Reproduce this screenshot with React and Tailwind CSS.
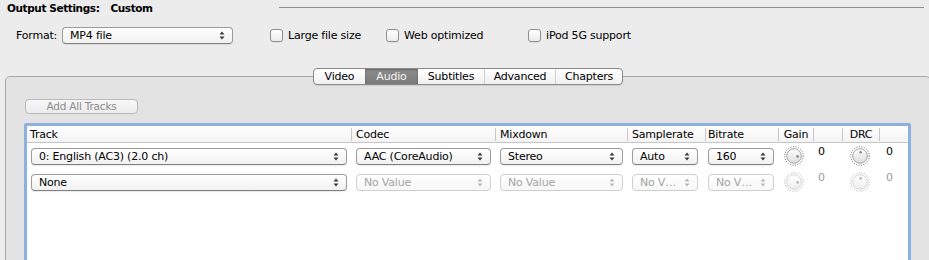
import React from "react";

function Stepper({ disabled }) {
  const c = disabled ? "#b8b8b8" : "#3a3a3a";
  return (
    <svg width="6" height="9" viewBox="0 0 6 9" className="flex-none">
      <path d="M0.5 3.5 L3 0.5 L5.5 3.5 Z" fill={c} />
      <path d="M0.5 5.5 L3 8.5 L5.5 5.5 Z" fill={c} />
    </svg>
  );
}

function Popup({ label, w, disabled, h = "h-[17px]" }) {
  return (
    <div
      className={`${w} ${h} flex-none flex items-center justify-between pl-[7px] pr-[7px] rounded-[4px] border bg-linear-to-b ${
        disabled
          ? "border-[#cfcfcf] from-white to-[#f7f7f7] text-[#a3a3a3]"
          : "border-[#9c9c9c] border-b-[#7f7f7f] from-white to-[#f1f1f1] text-black shadow-[0_1px_1px_rgba(0,0,0,0.08)]"
      }`}
    >
      <span className="truncate leading-none">{label}</span>
      <Stepper disabled={disabled} />
    </div>
  );
}

function Checkbox({ label }) {
  return (
    <div className="flex items-center">
      <div className="w-[13px] h-[13px] rounded-[3px] border border-[#8e8e8e] bg-linear-to-b from-white to-[#ebebeb] shadow-[0_1px_0_rgba(0,0,0,0.06)]" />
      <span className="ml-[5px] leading-none">{label}</span>
    </div>
  );
}

function Knob({ disabled, dot }) {
  const ring = disabled ? "#a8a8a8" : "#555";
  const edge = disabled ? "#cfcfcf" : "#9a9a9a";
  const dotC = disabled ? "#b5b5b5" : "#8a8a8a";
  return (
    <svg width="20" height="20" viewBox="0 0 20 20" className="flex-none">
      <defs>
        <linearGradient id={disabled ? "kgd" : "kg"} x1="0" y1="0" x2="0" y2="1">
          <stop offset="0" stopColor="#ffffff" />
          <stop offset="1" stopColor={disabled ? "#eeeeee" : "#dcdcdc"} />
        </linearGradient>
      </defs>
      <circle cx="10" cy="10" r="9.3" fill="none" stroke={ring} strokeWidth="1" strokeDasharray="0.9 1.6" />
      <circle cx="10" cy="10" r="7.3" fill={`url(#${disabled ? "kgd" : "kg"})`} stroke={edge} strokeWidth="0.9" />
      {dot === "right" ? (
        <circle cx="13.6" cy="10.4" r="1.3" fill={dotC} />
      ) : (
        <circle cx="10.6" cy="6.3" r="1.3" fill={dotC} />
      )}
    </svg>
  );
}

function HeadCell({ w, text, center, pl = "pl-[3px]", sep = true }) {
  return (
    <div className={`${w} flex-none h-full flex items-center`}>
      {center ? (
        <span className="flex-1 text-center leading-none">{text}</span>
      ) : (
        <span className={`flex-1 ${pl} leading-none`}>{text}</span>
      )}
      {sep && <span className="w-px h-[13px] bg-[#c9c9c9] mr-0" />}
    </div>
  );
}

function Row({ track, enabled }) {
  const d = !enabled;
  return (
    <div className="h-[26px] flex items-start">
      <div className="w-[325px] flex-none pl-[4px] pt-[5px]">
        <Popup label={track} w="w-[316px]" />
      </div>
      <div className="w-[144px] flex-none pl-[4px] pt-[5px]">
        <Popup label={enabled ? "AAC (CoreAudio)" : "No Value"} w="w-[135px]" disabled={d} />
      </div>
      <div className="w-[132px] flex-none pl-[4px] pt-[5px]">
        <Popup label={enabled ? "Stereo" : "No Value"} w="w-[123px]" disabled={d} />
      </div>
      <div className="w-[78px] flex-none pl-[4px] pt-[5px]">
        <Popup label={enabled ? "Auto" : "No V…"} w="w-[66px]" disabled={d} />
      </div>
      <div className="w-[73px] flex-none pl-[2px] pt-[5px]">
        <Popup label={enabled ? "160" : "No V…"} w="w-[66px]" disabled={d} />
      </div>
      <div className="w-[35px] flex-none pl-[5px] pt-[3px]">
        <Knob disabled={d} dot="right" />
      </div>
      <div className={`w-[29px] flex-none pl-[4px] pt-[3px] leading-none ${d ? "text-[#9a9a9a]" : "text-black"}`}>0</div>
      <div className="w-[37px] flex-none pl-[7px] pt-[3px]">
        <Knob disabled={d} dot="top" />
      </div>
      <div className={`flex-1 pl-[6px] pt-[3px] leading-none ${d ? "text-[#9a9a9a]" : "text-black"}`}>0</div>
    </div>
  );
}

export default function App() {
  const tabs = [
    { t: "Video", w: "w-[51px]" },
    { t: "Audio", w: "w-[53px]", sel: true },
    { t: "Subtitles", w: "w-[66px]" },
    { t: "Advanced", w: "w-[71px]", sep: true },
    { t: "Chapters", w: "w-[67px]", sep: true },
  ];
  return (
    <div className="w-[929px] h-[260px] overflow-hidden bg-[#ececec] text-[11px] tracking-[-0.2px] text-black font-['DejaVu_Sans',sans-serif] flex flex-col">
      {/* title row */}
      <div className="h-[16px] flex-none flex items-center pl-[7px]">
        <span className="font-bold text-[10.5px] tracking-[-0.4px] leading-none">Output Settings:</span>
        <span className="font-bold text-[10.5px] tracking-[-0.4px] leading-none ml-[11px]">Custom</span>
        <div className="ml-auto mr-[5px] w-[645px] h-px bg-[#8d8d8d] -mt-[1px]" />
      </div>

      {/* format row */}
      <div className="mt-[11px] h-[17px] flex-none flex items-center pl-[16px]">
        <span className="leading-none">Format:</span>
        <div className="ml-[5px]">
          <Popup label="MP4 file" w="w-[171px]" />
        </div>
        <div className="ml-[37px] w-[116px]">
          <Checkbox label="Large file size" />
        </div>
        <div className="w-[142px]">
          <Checkbox label="Web optimized" />
        </div>
        <div>
          <Checkbox label="iPod 5G support" />
        </div>
      </div>

      {/* tab box */}
      <div className="mt-[32px] ml-[5px] w-[926px] flex-1 border border-[#a7a7a7] rounded-t-[5px] bg-[#e3e3e3] flex flex-col">
        <div className="-mt-[9px] flex justify-center">
          <div className="h-[17px] flex rounded-[4px] border border-[#8a8a8a] overflow-hidden shadow-[0_1px_1px_rgba(0,0,0,0.1)] bg-linear-to-b from-white to-[#f0f0f0]">
            {tabs.map((tb) => (
              <div
                key={tb.t}
                className={`${tb.w} h-full flex items-center justify-center leading-none ${
                  tb.sel
                    ? "bg-linear-to-b from-[#8c8c8c] to-[#7a7a7a] text-[#f4f4f4] shadow-[inset_0_1px_2px_rgba(0,0,0,0.3)]"
                    : ""
                } ${tb.sep ? "border-l border-[#d0d0d0]" : ""}`}
              >
                {tb.t}
              </div>
            ))}
          </div>
        </div>

        <div className="mt-[14px] ml-[19px] w-[113px] h-[15px] flex items-center justify-center rounded-[4px] border border-[#b9b9b9] bg-linear-to-b from-[#f7f7f7] to-[#ececec] text-[#8c8c8c] text-[10.5px] leading-none">
          Add All Tracks
        </div>

        {/* table */}
        <div className="mt-[9px] ml-[18px] w-[887px] h-[200px] flex-none border-[3px] border-[#8cb1e1] rounded-[2px] bg-white flex flex-col">
          <div className="h-[17px] flex-none flex border-b border-[#c6c6c6] bg-linear-to-b from-white to-[#f3f3f3]">
            <HeadCell w="w-[325px]" text="Track" pl="pl-[3px]" />
            <HeadCell w="w-[144px]" text="Codec" pl="pl-[4px]" />
            <HeadCell w="w-[132px]" text="Mixdown" pl="pl-[4px]" />
            <HeadCell w="w-[78px]" text="Samplerate" pl="pl-[4px]" />
            <HeadCell w="w-[73px]" text="Bitrate" pl="pl-[2px]" />
            <HeadCell w="w-[35px]" text="Gain" center />
            <HeadCell w="w-[29px]" text="" />
            <HeadCell w="w-[37px]" text="DRC" center />
            <div className="flex-1" />
          </div>
          <Row track="0: English (AC3) (2.0 ch)" enabled />
          <Row track="None" enabled={false} />
        </div>
      </div>
    </div>
  );
}
